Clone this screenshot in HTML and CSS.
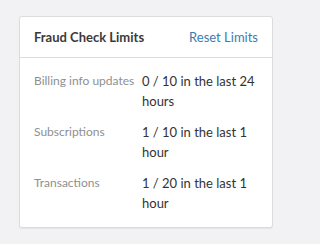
FILE: index.html
```html
<!DOCTYPE html>
<html>
<head>
<meta charset="utf-8">
<link rel="stylesheet" href="styles.css">
</head>
<body>
<div class="card">
  <div class="card-header">
    <span class="title">Fraud Check Limits</span>
    <a class="reset" href="#">Reset Limits</a>
  </div>
  <div class="card-body">
    <div class="row">
      <div class="label">Billing info updates</div>
      <div class="value">0 / 10 in the last 24 hours</div>
    </div>
    <div class="row">
      <div class="label">Subscriptions</div>
      <div class="value">1 / 10 in the last 1 hour</div>
    </div>
    <div class="row">
      <div class="label">Transactions</div>
      <div class="value">1 / 20 in the last 1 hour</div>
    </div>
  </div>
</div>
</body>
</html>
```
FILE: styles.css
```css
html, body {
  margin: 0;
  padding: 0;
  background: #f2f2f4;
}
body {
  padding: 16px 19px;
  font-family: Lato, "Noto Sans", sans-serif;
}
.card {
  width: 254px;
  box-sizing: border-box;
  background: #fff;
  border: 1px solid #dcdcdf;
  border-radius: 3px;
  box-shadow: 0 1px 1px rgba(0,0,0,0.06);
}
.card-header {
  display: flex;
  justify-content: space-between;
  align-items: center;
  height: 40px;
  padding: 0 14px;
  border-bottom: 1px solid #dcdcdf;
}
.title {
  font-weight: 700;
  font-size: 13px;
  color: #3a3a3a;
}
.reset {
  font-size: 13px;
  color: #3b7cb0;
  text-decoration: none;
}
.card-body {
  padding: 13px 14px 14px;
  display: flex;
  flex-direction: column;
  gap: 11px;
}
.row {
  display: grid;
  grid-template-columns: 108px 1fr;
  line-height: 20px;
}
.label {
  font-size: 12px;
  color: #8f8f8f;
}
.value {
  font-size: 13px;
  color: #333;
}
```
